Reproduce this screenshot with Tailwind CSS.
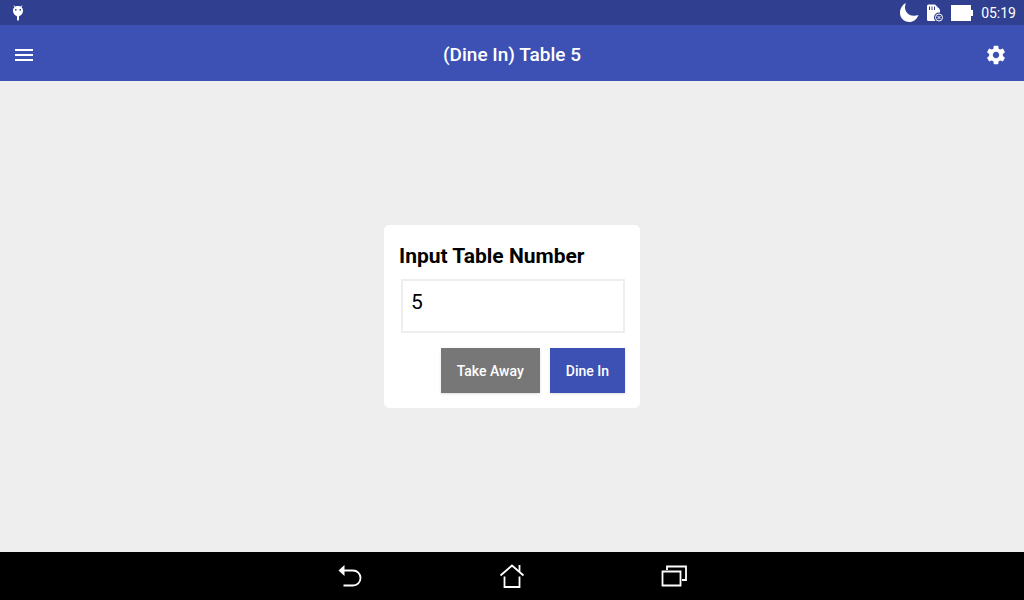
<!DOCTYPE html>
<html lang="en">
<head>
    <meta charset="UTF-8">
    <meta name="viewport" content="width=device-width, initial-scale=1.0">
    <title>(Dine In) Table 5</title>
    <script src="https://cdn.jsdelivr.net/npm/@tailwindcss/browser@4"></script>
</head>
<body class="font-[Roboto,sans-serif]">
    <div class="flex min-h-screen flex-col bg-[#eeeeee]">
        <!-- status bar -->
        <div class="flex h-[25px] items-center justify-between bg-[#303f8f] pr-2 pl-3 text-white">
            <svg class="h-4 w-3" viewBox="0 0 12 16" fill="currentColor">
                <path stroke="currentColor" d="M2 .5 3.500 2.500M10 .5 8.500 2.500"/>
                <path fill-rule="evenodd" d="M6 1C9 1 11 3 11 5.800S8.800 11.300 6 11.300 1 8.600 1 5.800 3 1 6 1zM3 4v1.500h1.500V4zm4.500 0v1.500H9V4z"/>
                <path d="M5 11h2v4l-1 .8L5 15z"/>
            </svg>
            <div class="flex items-center gap-2">
                <svg class="h-5 w-5" viewBox="0 0 20 20" fill="currentColor">
                    <path d="M7 0C3.500 7.500 9.500 15.200 19.500 12 17.800 16.500 14.300 19 10.300 19 5 19 1 15 1 9.800 1 5.500 3.400 1.600 7 0z"/>
                </svg>
                <svg class="h-5 w-4" viewBox="0 0 16 20">
                    <path fill="#fff" d="M0 3Q0 1.500 1.500 1.500H8l5 5V18H1.500Q0 18 0 16.500z"/>
                    <path stroke="#303f8f" d="M2.500 3.500V7M5 3.500V7M7.500 3.500V7"/>
                    <circle cx="12" cy="14.500" r="5" fill="#303f8f"/>
                    <circle cx="12" cy="14.500" r="3.500" fill="none" stroke="#fff"/>
                    <path stroke="#fff" d="m10.500 13 3 3m0-3-3 3"/>
                </svg>
                <svg class="h-4 w-[22px]" viewBox="0 0 22 16" fill="currentColor">
                    <path d="M0 0h20v5h2v6h-2v5H0z"/>
                </svg>
                <span class="text-sm">05:19</span>
            </div>
        </div>

        <!-- app bar -->
        <header class="grid h-14 grid-cols-[1fr_auto_1fr] items-center bg-[#3d50b4] pt-1 text-white">
            <button type="button" aria-label="Menu" class="ml-3 justify-self-start">
                <svg class="h-6 w-6" viewBox="0 0 24 24" fill="currentColor">
                    <path d="M3 18h18v-2H3v2zm0-5h18v-2H3v2zm0-7v2h18V6H3z"/>
                </svg>
            </button>
            <h1 class="text-[19px] leading-6 font-medium">(Dine In) Table 5</h1>
            <button type="button" aria-label="Settings" class="mr-[17px] justify-self-end">
                <svg class="h-[22px] w-[22px]" viewBox="0 0 24 24" fill="currentColor">
                    <path d="M19.430 12.980c.04-.32.07-.64.07-.98s-.03-.66-.07-.98l2.110-1.650c.19-.15.24-.42.12-.64l-2-3.460c-.12-.22-.39-.3-.61-.22l-2.490 1c-.52-.4-1.080-.73-1.690-.98l-.38-2.650C14.460 2.180 14.250 2 14 2h-4c-.25 0-.46.18-.49.42l-.38 2.650c-.61.25-1.170.59-1.690.98l-2.490-1c-.23-.09-.49 0-.61.22l-2 3.460c-.13.22-.07.49.12.64l2.110 1.650c-.04.32-.07.65-.07.98s.03.66.07.98l-2.110 1.650c-.19.15-.24.42-.12.64l2 3.460c.12.22.39.3.61.22l2.490-1c.52.4 1.080.73 1.690.98l.38 2.650c.03.24.24.42.49.42h4c.25 0 .46-.18.49-.42l.38-2.650c.61-.25 1.170-.59 1.690-.98l2.490 1c.23.09.49 0 .61-.22l2-3.460c.12-.22.07-.49-.12-.64l-2.110-1.650zM12 15.500c-1.930 0-3.500-1.570-3.500-3.500s1.570-3.500 3.500-3.500 3.500 1.570 3.500 3.500-1.570 3.500-3.500 3.500z"/>
                </svg>
            </button>
        </header>

        <main class="flex flex-1 items-center justify-center">
            <form class="w-1/4 min-w-64 rounded-[5px] bg-white p-[15px]">
                <label for="table-number" class="block text-[21px] leading-8 font-bold text-black">Input Table Number</label>
                <div class="mt-[7px] pl-[2px]">
                    <input id="table-number" type="text" inputmode="numeric" value="5" class="block h-[54px] w-full border-2 border-[#eeeeee] px-2 pb-2 text-[21px] text-black outline-none">
                </div>
                <div class="mt-[15px] flex justify-end gap-[10px] text-sm font-medium text-white">
                    <button type="button" class="h-[45px] bg-[#777777] px-4 shadow-sm">Take Away</button>
                    <button type="submit" class="h-[45px] bg-[#3d50b4] px-4 shadow-sm">Dine In</button>
                </div>
            </form>
        </main>

        <!-- system navigation -->
        <nav class="flex h-12 justify-center bg-black text-white">
            <button type="button" aria-label="Back" class="flex w-[162px] items-center justify-center">
                <svg class="h-7 w-7" viewBox="0 0 28 28" fill="none" stroke="currentColor" stroke-width="1.800">
                    <path d="M8 8.500h9a7.200 7.200 0 0 1 0 15H7.500"/>
                    <path d="M2.500 8.500 8.500 3v11z" fill="currentColor" stroke="none"/>
                </svg>
            </button>
            <button type="button" aria-label="Home" class="flex w-[162px] items-center justify-center">
                <svg class="h-7 w-7" viewBox="0 0 28 28" fill="none" stroke="currentColor" stroke-width="1.800">
                    <path d="M2.500 13.500 14 3.500l11.500 10M21.500 9.500V3M6.500 14.500v10.500h15V14.500"/>
                </svg>
            </button>
            <button type="button" aria-label="Recent apps" class="flex w-[162px] items-center justify-center">
                <svg class="h-7 w-7" viewBox="0 0 28 28" fill="none" stroke="currentColor" stroke-width="1.800">
                    <path d="M2.500 9.500h18v14h-18zM7 8V4.500h19v13.500h-4"/>
                </svg>
            </button>
        </nav>
    </div>
</body>
</html>
